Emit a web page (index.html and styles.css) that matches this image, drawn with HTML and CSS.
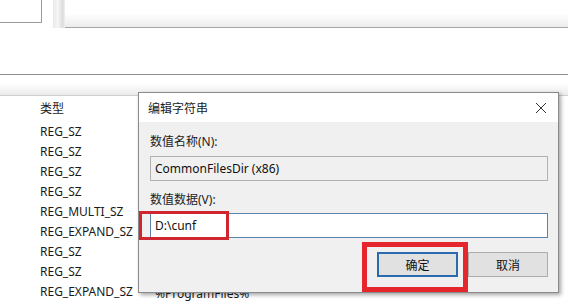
FILE: index.html
```html
<!DOCTYPE html>
<html lang="zh-CN">
<head>
    <meta charset="UTF-8">
    <title>编辑字符串</title>
    <link rel="stylesheet" href="styles.css">
</head>
<body>
    <div class="top">
        <div class="top-left">
            <div class="box"></div>
            <div class="splitter"></div>
        </div>
        <div class="top-right"></div>
    </div>
    <div class="pane"></div>
    <div class="bar"></div>

    <div class="list">
        <div class="row head"><span class="type">类型</span></div>
        <div class="row"><span class="type">REG_SZ</span></div>
        <div class="row"><span class="type">REG_SZ</span></div>
        <div class="row"><span class="type">REG_SZ</span></div>
        <div class="row"><span class="type">REG_SZ</span></div>
        <div class="row"><span class="type">REG_MULTI_SZ</span></div>
        <div class="row"><span class="type">REG_EXPAND_SZ</span></div>
        <div class="row"><span class="type">REG_SZ</span></div>
        <div class="row"><span class="type">REG_SZ</span></div>
        <div class="row"><span class="type">REG_EXPAND_SZ</span><span class="data">%ProgramFiles%</span></div>
    </div>

    <div class="dialog">
        <div class="title-bar">
            <span class="title">编辑字符串</span>
            <svg class="close" width="12" height="12" viewBox="0 0 12 12">
                <path d="M1 1 L11 11 M11 1 L1 11" stroke="#333" stroke-width="1" fill="none"/>
            </svg>
        </div>
        <div class="dialog-body">
            <div class="label">数值名称(N):</div>
            <div class="field readonly">CommonFilesDir (x86)</div>
            <div class="label second">数值数据(V):</div>
            <div class="field active">D:\cunf</div>
            <div class="buttons">
                <div class="btn primary">确定</div>
                <div class="btn">取消</div>
            </div>
        </div>
    </div>

    <div class="mark mark-field"></div>
    <div class="mark mark-ok"></div>
</body>
</html>
```

FILE: styles.css
```css
body {
    margin: 0;
    width: 568px;
    height: 303px;
    overflow: hidden;
    position: relative;
    background: #fff;
    font-family: "Noto Sans", "Noto Sans CJK SC", sans-serif;
    font-size: 12px;
    color: #1a1a1a;
}
.top {
    display: flex;
    height: 28px;
}
.top-left {
    display: flex;
    width: 65px;
}
.box {
    width: 41px;
    height: 22px;
    border-right: 1px solid #9a9a9a;
    border-bottom: 1px solid #9a9a9a;
}
.splitter {
    margin-left: 11px;
    width: 12px;
    height: 28px;
    background: linear-gradient(90deg, #e8e8e8, #f6f6f6 40%, #dcdcdc 80%, #f0f0f0);
}
.top-right {
    flex: 1;
    background: linear-gradient(#fff 50%, #ececec);
    border-bottom: 1px solid #a6a6a6;
}
.pane {
    height: 46px;
}
.bar {
    height: 20px;
    border-top: 1px solid #8e8e8e;
    border-bottom: 1px solid #cfcfcf;
    background: linear-gradient(#fff 40%, #ebebeb);
}
.list .row {
    display: flex;
    height: 20px;
    line-height: 20px;
}
.list .row.head {
    height: 26px;
    line-height: 26px;
}
.type {
    width: 115px;
    padding-left: 40px;
}
.data {
    white-space: nowrap;
    padding-top: 2px;
}
.dialog {
    position: absolute;
    left: 138px;
    top: 92px;
    width: 421px;
    height: 201px;
    box-sizing: border-box;
    border: 1px solid #8a8a8a;
    background: #f0f0f0;
    box-shadow: 2px 2px 4px rgba(0, 0, 0, 0.35);
}
.title-bar {
    display: flex;
    align-items: center;
    justify-content: space-between;
    height: 29px;
    padding: 0 9px 0 9px;
    background: #fff;
}
.title {
    font-family: "Noto Sans CJK SC", sans-serif;
    font-size: 12px;
    color: #222;
}
.close {
    margin-right: 2px;
}
.dialog-body {
    padding: 0 10px 0 11px;
}
.label {
    margin-top: 12px;
    height: 16px;
    line-height: 16px;
    color: #222;
}
.label.second {
    margin-top: 11px;
}
.field {
    box-sizing: border-box;
    height: 25px;
    line-height: 23px;
    padding-left: 4px;
    margin-top: 6px;
    color: #111;
}
.field.readonly {
    background: #f0f0f0;
    border: 1px solid #b2b2b2;
}
.field.active {
    margin-top: 5px;
    background: #fff;
    border: 1px solid #5b82a8;
}
.buttons {
    display: flex;
    justify-content: flex-end;
    gap: 10px;
    margin-top: 14px;
}
.btn {
    box-sizing: border-box;
    width: 80px;
    height: 25px;
    line-height: 23px;
    text-align: center;
    background: #e1e1e1;
    border: 1px solid #adadad;
    font-family: "Noto Sans CJK SC", sans-serif;
    color: #111;
}
.btn.primary {
    width: 81px;
    line-height: 21px;
    border: 2px solid #2a6bb0;
}
.mark {
    position: absolute;
    box-sizing: border-box;
}
.mark-field {
    left: 139px;
    top: 211px;
    width: 90px;
    height: 29px;
    border: 3px solid #cf2630;
}
.mark-ok {
    left: 362px;
    top: 242px;
    width: 106px;
    height: 50px;
    border: 5px solid #e5262c;
}
```
